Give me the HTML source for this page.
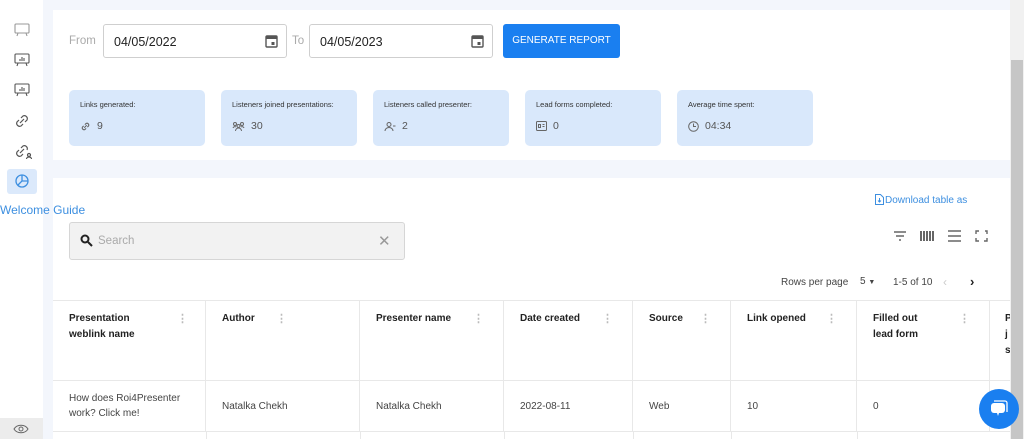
<!DOCTYPE html>
<html><head><meta charset="utf-8"><style>
*{box-sizing:border-box;margin:0;padding:0}
body{width:1024px;height:439px;overflow:hidden;background:#f3f6fc;font-family:"Liberation Sans",sans-serif;position:relative;color:#333}
.abs{position:absolute}
.side{left:0;top:0;width:43px;height:439px;background:#fff}
.card1{left:53px;top:10px;width:957px;height:150px;background:#fff}
.card2{left:53px;top:178px;width:957px;height:261px;background:#fff}
.date{background:#fff;border:1px solid #cfcfcf;border-radius:3px;height:34px;top:24px;font-size:12.5px;color:#222;padding:10px 0 0 10px}
.stat{top:90px;width:136px;height:56px;background:#d9e8fb;border-radius:5px;padding:10px 0 0 11px;font-size:7.5px;color:#333}
.stat .v{font-size:10.5px;color:#555;margin-top:11px;display:flex;align-items:center;gap:6px}
.th{top:301px;height:80px;border-right:1px solid #e8e8e8;font-size:10px;font-weight:bold;color:#222;padding:10px 0 0 16px;line-height:16px}
.td{top:381px;height:50px;border-right:1px solid #e8e8e8;font-size:10px;color:#444;padding:0 0 0 16px;display:flex;align-items:center;line-height:15px}
.dots{position:absolute;top:10px;color:#bbb;font-size:11px}
</style></head><body>
<div class="abs side"></div>
<svg class="abs" style="left:13px;top:22px" width="18" height="16" viewBox="0 0 18 16" fill="none" stroke="#999" stroke-width="1.1"><rect x="2" y="2" width="14" height="9" rx="1"/><path d="M5 11l-1 3M13 11l1 3"/></svg>
<svg class="abs" style="left:13px;top:52px" width="18" height="16" viewBox="0 0 18 16" fill="none" stroke="#555" stroke-width="1.1"><rect x="2" y="2" width="14" height="9" rx="1"/><path d="M5 11l-1 3M13 11l1 3M7 9V7M9 9V5M11 9V6"/></svg>
<svg class="abs" style="left:13px;top:82px" width="18" height="16" viewBox="0 0 18 16" fill="none" stroke="#555" stroke-width="1.1"><rect x="2" y="2" width="14" height="9" rx="1"/><path d="M5 11l-1 3M13 11l1 3M7 9V7M9 9V5M11 9V6"/></svg>
<svg class="abs" style="left:13px;top:112px" width="18" height="18" viewBox="0 0 18 18" fill="none" stroke="#555" stroke-width="1.2"><path d="M8 6l2-2a3 3 0 014 4l-2 2M10 12l-2 2a3 3 0 01-4-4l2-2M7 11l4-4"/></svg>
<svg class="abs" style="left:13px;top:142px" width="20" height="18" viewBox="0 0 20 18" fill="none" stroke="#555" stroke-width="1.2"><path d="M8 6l2-2a3 3 0 014 4M10 12l-2 2a3 3 0 01-4-4l2-2M7 11l4-4"/><circle cx="16" cy="13" r="1.5"/><path d="M13.5 17a2.5 2 0 015 0"/></svg>
<div class="abs" style="left:7px;top:169px;width:30px;height:25px;background:#dbe9fb;border-radius:3px"></div>
<svg class="abs" style="left:14px;top:173px" width="16" height="16" viewBox="0 0 16 16" fill="none" stroke="#3d8fe0" stroke-width="1.3"><circle cx="8" cy="8" r="6"/><path d="M8 2v6l-4 4M8 8h6"/></svg>
<div class="abs" style="left:0;top:203px;font-size:12px;color:#3d8fe0;white-space:nowrap;z-index:3">Welcome Guide</div>
<div class="abs" style="left:0;top:418px;width:43px;height:21px;background:#ececec"></div>
<svg class="abs" style="left:13px;top:423px" width="16" height="12" viewBox="0 0 16 12" fill="none" stroke="#666" stroke-width="1"><path d="M1 6c3-5 11-5 14 0c-3 5-11 5-14 0z"/><circle cx="8" cy="6" r="2"/></svg>

<div class="abs card1"></div>
<div class="abs" style="left:69px;top:35px;font-size:11.5px;color:#aaa">From</div>
<div class="abs date" style="left:103px;width:184px">04/05/2022</div>
<svg class="abs" style="left:265px;top:34px" width="13" height="14" viewBox="0 0 13 14"><rect x="1" y="2" width="11" height="11" rx="1" fill="none" stroke="#555" stroke-width="1.4"/><rect x="1" y="2" width="11" height="3" fill="#555"/><rect x="6.5" y="8" width="3" height="3" fill="#555"/></svg>
<div class="abs" style="left:292px;top:35px;font-size:11.5px;color:#aaa">To</div>
<div class="abs date" style="left:309px;width:184px">04/05/2023</div>
<svg class="abs" style="left:471px;top:34px" width="13" height="14" viewBox="0 0 13 14"><rect x="1" y="2" width="11" height="11" rx="1" fill="none" stroke="#555" stroke-width="1.4"/><rect x="1" y="2" width="11" height="3" fill="#555"/><rect x="6.5" y="8" width="3" height="3" fill="#555"/></svg>
<div class="abs" style="left:503px;top:24px;width:117px;height:34px;background:#1a7ff0;border-radius:3px;color:#fff;font-size:10px;text-align:center;line-height:34px">GENERATE REPORT</div>

<div class="abs stat" style="left:69px">Links generated:<div class="v"><svg width="11" height="11" viewBox="0 0 18 18" fill="none" stroke="#666" stroke-width="1.8"><path d="M8 6l2-2a3 3 0 014 4l-2 2M10 12l-2 2a3 3 0 01-4-4l2-2M7 11l4-4"/></svg>9</div></div>
<div class="abs stat" style="left:221px">Listeners joined presentations:<div class="v"><svg width="13" height="11" viewBox="0 0 13 11" fill="none" stroke="#666" stroke-width="1"><circle cx="3" cy="3" r="1.5"/><circle cx="6.5" cy="5" r="1.5"/><circle cx="10" cy="3" r="1.5"/><path d="M3.5 10a3 3 0 016 0M1 7a2 2 0 013-1M12 7a2 2 0 00-3-1"/></svg>30</div></div>
<div class="abs stat" style="left:373px">Listeners called presenter:<div class="v"><svg width="12" height="11" viewBox="0 0 12 11" fill="none" stroke="#666" stroke-width="1"><circle cx="5" cy="3.5" r="2"/><path d="M1 10a4 3.5 0 018 0M9 5h2.5"/></svg>2</div></div>
<div class="abs stat" style="left:525px">Lead forms completed:<div class="v"><svg width="11" height="10" viewBox="0 0 11 10" fill="none" stroke="#666" stroke-width="1"><rect x="0.5" y="0.5" width="10" height="9" rx="1"/><path d="M2.5 3.5h2v3h-2zM6.5 3.5h2M6.5 5.5h2"/></svg>0</div></div>
<div class="abs stat" style="left:677px">Average time spent:<div class="v"><svg width="11" height="11" viewBox="0 0 11 11" fill="none" stroke="#666" stroke-width="1"><circle cx="5.5" cy="5.5" r="4.8"/><path d="M5.5 2.5v3h2.5"/></svg>04:34</div></div>

<div class="abs card2"></div>
<svg class="abs" style="left:875px;top:194px" width="9" height="11" viewBox="0 0 9 11" fill="none" stroke="#3d8fe0" stroke-width="1"><path d="M.5.5h5l3 3v7h-8z"/><path d="M4.5 4v4M3 6.5l1.5 1.5 1.5-1.5"/></svg>
<div class="abs" style="left:885px;top:195px;font-size:10px;color:#3d8fe0">Download table as</div>
<div class="abs" style="left:69px;top:222px;width:336px;height:38px;background:#f2f2f2;border:1px solid #d6d6d6;border-radius:3px"></div>
<svg class="abs" style="left:80px;top:234px" width="13" height="13" viewBox="0 0 13 13" fill="none" stroke="#222" stroke-width="2"><circle cx="5" cy="5" r="3.5"/><path d="M8 8l4 4"/></svg>
<div class="abs" style="left:98px;top:235px;font-size:11.5px;color:#aaa">Search</div>
<div class="abs" style="left:378px;top:232px;font-size:15px;color:#999">✕</div>
<svg class="abs" style="left:893px;top:230px" width="95" height="12" viewBox="0 0 95 12" fill="none" stroke="#666" stroke-width="1.4"><path d="M1 2h12M3 6h8M6 10h2"/><path d="M28 1v10M31 1v10M34 1v10M37 1v10M40 1v10" stroke-width="2"/><path d="M55 1h13M55 6h13M55 11h13"/><path d="M83 4V1h3M92 1h2v3M94 8v3h-3M86 11h-3V8"/></svg>
<div class="abs" style="left:781px;top:277px;font-size:10px;color:#444">Rows per page</div>
<div class="abs" style="left:860px;top:276px;font-size:10px;color:#444">5 <span style="font-size:7px">▼</span></div>
<div class="abs" style="left:893px;top:277px;font-size:10px;color:#444">1-5 of 10</div>
<div class="abs" style="left:943px;top:275px;font-size:12px;color:#ccc">‹</div>
<div class="abs" style="left:970px;top:274px;font-size:13px;color:#222;font-weight:bold">›</div>

<div class="abs" style="left:53px;top:300px;width:957px;height:1px;background:#e8e8e8"></div>
<div class="abs" style="left:53px;top:380px;width:957px;height:1px;background:#e8e8e8"></div>
<div class="abs" style="left:53px;top:431px;width:957px;height:1px;background:#e8e8e8"></div>
<div class="abs th" style="left:53px;width:153px">Presentation<br>weblink name<span class="dots" style="left:124px">⋮</span></div>
<div class="abs th" style="left:206px;width:154px">Author<span class="dots" style="left:70px">⋮</span></div>
<div class="abs th" style="left:360px;width:144px">Presenter name<span class="dots" style="left:113px">⋮</span></div>
<div class="abs th" style="left:504px;width:129px">Date created<span class="dots" style="left:98px">⋮</span></div>
<div class="abs th" style="left:633px;width:98px">Source<span class="dots" style="left:67px">⋮</span></div>
<div class="abs th" style="left:731px;width:126px">Link opened<span class="dots" style="left:95px">⋮</span></div>
<div class="abs th" style="left:857px;width:133px">Filled out<br>lead form<span class="dots" style="left:102px">⋮</span></div>
<div class="abs th" style="left:990px;width:20px;border:none;padding-left:15px">P<br>j<br>s</div>
<div class="abs td" style="left:53px;width:153px">How does Roi4Presenter<br>work? Click me!</div>
<div class="abs td" style="left:206px;width:154px">Natalka Chekh</div>
<div class="abs td" style="left:360px;width:144px">Natalka Chekh</div>
<div class="abs td" style="left:504px;width:129px">2022-08-11</div>
<div class="abs td" style="left:633px;width:98px">Web</div>
<div class="abs td" style="left:731px;width:126px">10</div>
<div class="abs td" style="left:857px;width:133px">0</div>
<div class="abs" style="left:206px;top:431px;width:1px;height:8px;background:#e8e8e8"></div>
<div class="abs" style="left:360px;top:431px;width:1px;height:8px;background:#e8e8e8"></div>
<div class="abs" style="left:504px;top:431px;width:1px;height:8px;background:#e8e8e8"></div>
<div class="abs" style="left:633px;top:431px;width:1px;height:8px;background:#e8e8e8"></div>
<div class="abs" style="left:731px;top:431px;width:1px;height:8px;background:#e8e8e8"></div>
<div class="abs" style="left:857px;top:431px;width:1px;height:8px;background:#e8e8e8"></div>

<div class="abs" style="left:1010px;top:0;width:14px;height:439px;background:#f1f1f1"></div>
<div class="abs" style="left:1011px;top:60px;width:12px;height:379px;background:#c6c6c6"></div>
<div class="abs" style="left:979px;top:389px;width:40px;height:40px;border-radius:50%;background:#1a7ff0"></div>
<svg class="abs" style="left:989px;top:400px" width="20" height="18" viewBox="0 0 20 18"><path d="M5 1h11a2 2 0 012 2v9" fill="none" stroke="#fff" stroke-width="1.3"/><rect x="2" y="3" width="14" height="10" rx="3" fill="#fff"/><path d="M8 13l1 3 1-3z" fill="#fff"/></svg>
</body></html>
